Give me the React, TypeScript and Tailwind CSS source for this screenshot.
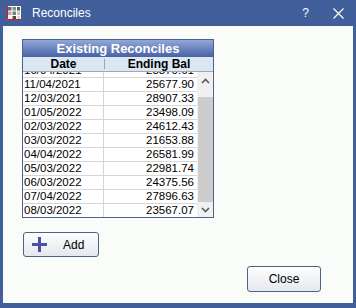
import React from "react";

const rows: [string, string][] = [
  ["10/04/2021", "25870.61"],
  ["11/04/2021", "25677.90"],
  ["12/03/2021", "28907.33"],
  ["01/05/2022", "23498.09"],
  ["02/03/2022", "24612.43"],
  ["03/03/2022", "21653.88"],
  ["04/04/2022", "26581.99"],
  ["05/03/2022", "22981.74"],
  ["06/03/2022", "24375.56"],
  ["07/04/2022", "27896.63"],
  ["08/03/2022", "23567.07"],
];

function WinIcon() {
  return (
    <svg width="14" height="14" viewBox="0 0 14 14">
      <rect x="0" y="0" width="14" height="14" fill="#ffffff" />
      <rect x="1" y="1" width="3.5" height="3.5" fill="#6a6a6a" />
      <rect x="5.5" y="1" width="3.5" height="3.5" fill="#8a8a8a" />
      <rect x="10" y="1" width="3" height="3.5" fill="#5a5a5a" />
      <rect x="1" y="5.5" width="3.5" height="3.5" fill="#b0b0b0" />
      <rect x="5.5" y="5.5" width="3.5" height="3.5" fill="#7c7c7c" />
      <rect x="10" y="5.5" width="3" height="3.5" fill="#c4c4c4" />
      <rect x="1" y="10" width="3.5" height="3" fill="#f4f4f4" />
      <rect x="5.5" y="10" width="3.5" height="3" fill="#4a4a4a" />
      <rect x="10" y="10" width="3" height="3" fill="#d8d8d8" />
      <path d="M0.5 0 V13.5 H14" stroke="#e0141a" strokeWidth="1" fill="none" />
    </svg>
  );
}

function Chevron({ up }: { up?: boolean }) {
  return (
    <svg width="9" height="6" viewBox="0 0 9 6">
      <path d={up ? "M1 5 L4.5 1.5 L8 5" : "M1 1 L4.5 4.5 L8 1"} stroke="#5a5a5a" strokeWidth="1.6" fill="none" />
    </svg>
  );
}

export default function App() {
  return (
    <div
      className="w-[356px] h-[308px] bg-[#41609b] flex flex-col text-black"
      style={{ fontFamily: '"Liberation Sans", Arial, sans-serif' }}
    >
      {/* title bar */}
      <div className="h-[26px] flex items-center pl-[7px] pr-[12px]">
        <WinIcon />
        <span className="ml-[11px] text-[12px] text-white">Reconciles</span>
        <span className="ml-auto text-[12px] text-white mr-[24px]">?</span>
        <svg width="11" height="11" viewBox="0 0 11 11">
          <path d="M0.5 0.5 L10.5 10.5 M10.5 0.5 L0.5 10.5" stroke="#ffffff" strokeWidth="1.2" />
        </svg>
      </div>

      {/* body */}
      <div className="flex-1 mx-[3px] mb-[5px] bg-[#fafcfa] flex flex-col pt-[13px] pl-[19px]">
        <div className="w-[192px] h-[179px] border border-[#4d6190] flex flex-col bg-white">
          <div className="h-[17px] bg-gradient-to-b from-[#93a8d8] to-[#4862a4] flex items-center justify-center text-white font-bold text-[13px]">
            Existing Reconciles
          </div>
          <div className="h-[15px] bg-[#dce7f4] border-b border-[#a0a8b4] flex text-[12px] font-bold leading-[14px]">
            <div className="w-[81px] flex items-center justify-center">Date</div>
            <div className="w-px my-[2px] bg-[#9aa3b0]" />
            <div className="flex-1 flex items-center justify-center">Ending Bal</div>
          </div>
          <div className="flex-1 flex overflow-hidden">
            <div className="flex-1 overflow-hidden">
              <div className="-mt-[8px]">
                {rows.map(([d, v]) => (
                  <div key={d} className="h-[14px] flex border-b border-[#d6d6d6] text-[11.5px] leading-[13px]">
                    <div className="w-[81px] pl-[1px] border-r border-[#d6d6d6]">{d}</div>
                    <div className="flex-1 text-right pr-[3px]">{v}</div>
                  </div>
                ))}
              </div>
            </div>
            <div className="w-[16px] bg-[#f0f0f0] flex flex-col items-center">
              <div className="h-[17px] flex items-center justify-center">
                <Chevron up />
              </div>
              <div className="mt-[8px] w-[15px] h-[105px] bg-[#cdcdcd]" />
              <div className="flex-1 flex items-center justify-center">
                <Chevron />
              </div>
            </div>
          </div>
        </div>

        <button className="mt-[14px] ml-[1px] w-[76px] h-[25px] rounded-[3px] border border-[#4f6285] bg-gradient-to-b from-[#fdfdfd] to-[#e4e8ee] flex items-center pl-[7px] text-[12px]">
          <svg width="17" height="17" viewBox="0 0 17 17">
            <path d="M8.5 1 V16 M1 8.5 H16" stroke="#4b4fa3" strokeWidth="3" />
          </svg>
          <span className="ml-[15px]">Add</span>
        </button>

        <div className="flex justify-end mt-[9px] pr-[32px]">
          <button className="w-[74px] h-[26px] rounded-[3px] border border-[#4f6285] bg-gradient-to-b from-[#fdfdfd] to-[#e4e8ee] flex items-center justify-center text-[12px]">
            Close
          </button>
        </div>
      </div>
    </div>
  );
}
